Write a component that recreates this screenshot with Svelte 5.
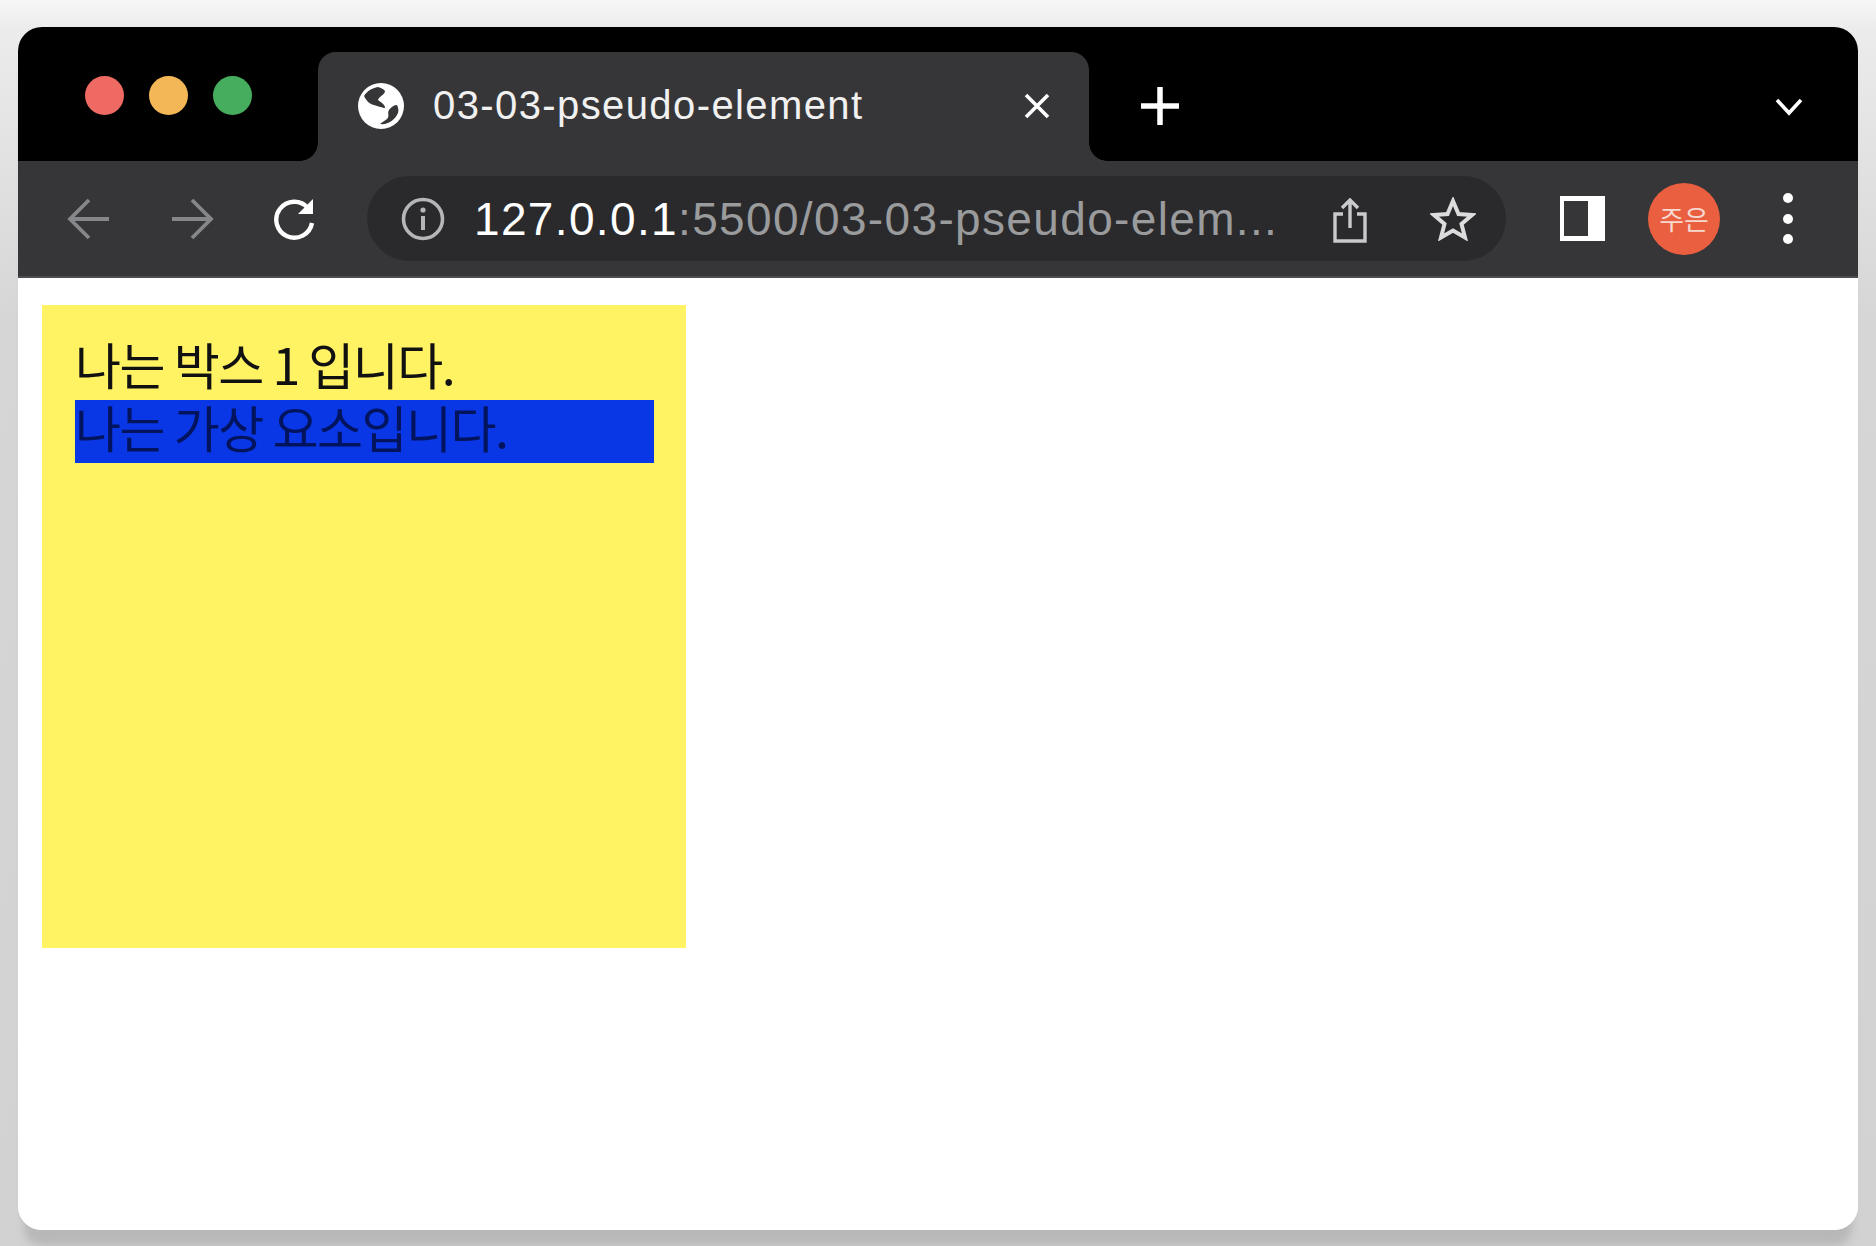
<script>
	let title = '03-03-pseudo-element'
	let host = '127.0.0.1'
	let path = ':5500/03-03-pseudo-elem...'
</script>

<main class="window">
	<header class="tabstrip">
		<div class="lights">
			<span class="light red"></span>
			<span class="light yellow"></span>
			<span class="light green"></span>
		</div>
		<div class="tab">
			<svg class="globe" viewBox="0 0 46 46">
				<circle cx="23" cy="23" r="23" fill="#fff" />
				<path d="M20 4 C14 5 9 8 6 13 C8 17 11 21 16 22 C20 23 25 25 27 25 C27 21 22 19 20 17 C21 13 27 12 27 8 C26 6 23 5 20 4 Z" fill="#363638" />
				<path d="M39 22 C36 22 33 24 31 27 C29 30 32 33 29 36 C27 38 24 39 22 41 C30 42 37 37 40 30 C41 27 40 24 39 22 Z" fill="#363638" />
			</svg>
			<span class="tab-title">{title}</span>
			<svg class="tab-close" viewBox="0 0 26 26">
				<path d="M2 2 L24 24 M24 2 L2 24" stroke="#fff" stroke-width="3.6" fill="none" />
			</svg>
		</div>
		<svg class="new-tab" viewBox="0 0 38 38">
			<path d="M19 0 V38 M0 19 H38" stroke="#fff" stroke-width="5.5" fill="none" />
		</svg>
		<svg class="tab-menu" viewBox="0 0 30 20">
			<path d="M3 3 L15 16 L27 3" stroke="#fff" stroke-width="3.6" fill="none" />
		</svg>
	</header>

	<nav class="toolbar">
		<svg class="arrow" viewBox="0 0 43 42">
			<path d="M42 21 H3 M22 2 L3 21 L22 40" stroke="#85878a" stroke-width="3.8" fill="none" />
		</svg>
		<svg class="arrow forward" viewBox="0 0 43 42">
			<path d="M1 21 H40 M21 2 L40 21 L21 40" stroke="#85878a" stroke-width="3.8" fill="none" />
		</svg>
		<svg class="reload" viewBox="0 0 44 44">
			<path d="M36 11 A18 18 0 1 0 40 26" stroke="#fff" stroke-width="4.4" fill="none" />
			<path d="M41 2 V17 H26 Z" fill="#fff" />
		</svg>
		<div class="omnibox">
			<svg class="info" viewBox="0 0 44 44">
				<circle cx="22" cy="22" r="19.5" stroke="#b4b6b8" stroke-width="3.6" fill="none" />
				<circle cx="22" cy="13" r="2.6" fill="#b4b6b8" />
				<path d="M22 19 V33" stroke="#b4b6b8" stroke-width="4" />
			</svg>
			<span class="url"><span class="host">{host}</span>{path}</span>
			<svg class="share" viewBox="0 0 36 46">
				<path d="M11 16 H3 V43 H33 V16 H25 M18 30 V3 M10 10 L18 2 L26 10" stroke="#c9cacb" stroke-width="3.4" fill="none" />
			</svg>
			<svg class="star" viewBox="0 0 46 44">
				<path d="M23 4 L28.5 17 L42 18 L31.5 27 L35 40.5 L23 33.5 L11 40.5 L14.5 27 L4 18 L17.5 17 Z" stroke="#dcdcdd" stroke-width="4" fill="none" />
			</svg>
		</div>
		<div class="panel-icon"><span></span></div>
		<div class="avatar">주은</div>
		<div class="dots"><span></span><span></span><span></span></div>
	</nav>

	<section class="page">
		<div class="box">
			나는 박스 1 입니다.
			<div class="pseudo">나는 가상 요소입니다.</div>
		</div>
	</section>
</main>

<style>
	:global(body) {
		background: #fff;
		font-family: "Liberation Sans", Arial, sans-serif;
	}

	:global(#app) {
		height: 1246px;
		overflow: hidden;
		background: linear-gradient(#f7f7f7, #ececec 27px, #d6d6d6 320px, #d2d2d2);
	}

	.window {
		width: 1840px;
		height: 1203px;
		margin: 27px 18px 0;
		border-radius: 24px;
		overflow: hidden;
		display: flex;
		flex-direction: column;
		background: #fff;
		box-shadow: 0 22px 8px -6px #b8b8b8;
	}

	.tabstrip {
		height: 134px;
		flex: none;
		background: #000;
		display: flex;
		align-items: flex-start;
	}

	.lights {
		width: 300px;
		flex: none;
		box-sizing: border-box;
		padding: 49px 0 0 67px;
		display: flex;
		gap: 25px;
	}

	.light {
		width: 39px;
		height: 39px;
		border-radius: 50%;
	}
	.red { background: #ee6a62; }
	.yellow { background: #f4b757; }
	.green { background: #46ad5e; }

	.tab {
		position: relative;
		width: 771px;
		height: 109px;
		margin-top: 25px;
		box-sizing: border-box;
		padding: 0 39px 2px 40px;
		flex: none;
		display: flex;
		align-items: center;
		background: #363638;
		border-radius: 18px 18px 0 0;
	}

	/* the little flares where the tab meets the toolbar */
	.tab::before,
	.tab::after {
		content: '';
		position: absolute;
		bottom: 0;
		width: 18px;
		height: 18px;
		background: radial-gradient(circle at var(--cx) 0, #000 17.5px, #363638 18px);
	}
	.tab::before { left: -18px; --cx: 0; }
	.tab::after { right: -18px; --cx: 100%; }

	.globe {
		width: 46px;
		height: 46px;
		flex: none;
	}

	.tab-title {
		margin-left: 29px;
		font-size: 40px;
		letter-spacing: 1.4px;
		color: #f1f1f1;
		white-space: nowrap;
	}

	.tab-close {
		width: 26px;
		height: 26px;
		margin-left: auto;
		flex: none;
	}

	.new-tab {
		width: 38px;
		height: 38px;
		margin: 60px 0 0 52px;
		flex: none;
	}

	.tab-menu {
		width: 30px;
		height: 20px;
		margin: 70px 54px 0 auto;
		flex: none;
	}

	.toolbar {
		height: 117px;
		flex: none;
		box-sizing: border-box;
		padding-left: 49px;
		background: #363638;
		border-bottom: 2px solid #4c4d50;
		display: flex;
		align-items: center;
	}

	.arrow {
		width: 43px;
		height: 42px;
		flex: none;
	}

	.forward { margin-left: 61px; }

	.reload {
		width: 44px;
		height: 44px;
		margin-left: 58px;
		flex: none;
	}

	.omnibox {
		width: 1139px;
		height: 85px;
		margin-left: 51px;
		flex: none;
		box-sizing: border-box;
		padding-left: 34px;
		background: #2a2a2c;
		border-radius: 43px;
		display: flex;
		align-items: center;
	}

	.info {
		width: 44px;
		height: 44px;
		flex: none;
	}

	.url {
		margin-left: 29px;
		width: 801px;
		font-size: 46px;
		letter-spacing: 1.35px;
		color: #9a9b9d;
		white-space: nowrap;
	}

	.host { color: #fff; }

	.share {
		width: 36px;
		height: 46px;
		margin: 4px 0 0 57px;
		flex: none;
	}

	.star {
		width: 46px;
		height: 44px;
		margin-left: 62px;
		flex: none;
	}

	.panel-icon {
		width: 45px;
		height: 45px;
		margin-left: 54px;
		flex: none;
		box-sizing: border-box;
		border: 5px solid #fff;
		border-left-width: 4px;
		border-right-width: 17px;
		display: flex;
	}

	.panel-icon span {
		flex: 1;
		background: #363638;
	}

	.avatar {
		width: 72px;
		height: 72px;
		margin-left: 43px;
		flex: none;
		border-radius: 50%;
		background: #ea5f40;
		color: #f6d8cf;
		font: 27px "Noto Sans CJK KR", sans-serif;
		display: flex;
		align-items: center;
		justify-content: center;
	}

	.dots {
		margin-left: 63px;
		display: flex;
		flex-direction: column;
		gap: 10.5px;
	}

	.dots span {
		width: 10px;
		height: 10px;
		border-radius: 50%;
		background: #fff;
	}

	.page {
		flex: 1;
		padding: 27px 24px;
		background: #fff;
	}

	.box {
		width: 644px;
		height: 643px;
		box-sizing: border-box;
		padding: 32px 32px 0 33px;
		background: #fff263;
		color: #111;
		font: 50px/53px "Noto Sans CJK KR", sans-serif;
		letter-spacing: -1.5px;
	}

	.pseudo {
		margin-top: 10px;
		padding-bottom: 10px;
		background: #0a37e6;
		color: #03145f;
	}
</style>
